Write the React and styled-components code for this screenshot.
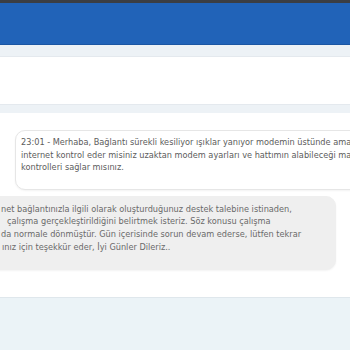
import React from "react";
import styled, { createGlobalStyle } from "styled-components";

const GlobalStyle = createGlobalStyle`
  html, body {
    margin: 0;
    padding: 0;
    width: 350px;
    height: 350px;
    overflow: hidden;
    background: #ebf3f7;
    font-family: "DejaVu Sans", "Open Sans", sans-serif;
  }
`;

const Page = styled.div`
  display: flex;
  flex-direction: column;
  width: 350px;
  height: 350px;
  overflow: hidden;
`;

const TopStrip = styled.div`
  height: 3px;
  background: #3b3e43;
`;

const Header = styled.header`
  height: 41px;
  background: #2163b8;
  border-bottom: 1px solid #1b56a3;
`;

const Band = styled.div`
  height: ${({ $h }) => $h}px;
  background: #edf2f6;
  border-top: ${({ $top }) => ($top ? "1px solid #e4e9ee" : "none")};
  border-bottom: ${({ $bottom }) => ($bottom ? "1px solid #e4e9ee" : "none")};
`;

const Panel = styled.div`
  height: ${({ $h }) => $h}px;
  background: #ffffff;
`;

const ChatArea = styled.div`
  display: flex;
  flex-direction: column;
  gap: 6px;
  padding: 17px 0 27px;
  background: #ffffff;
  border-bottom: 1px solid #dfe7ec;
`;

const Row = styled.div`
  display: flex;
  justify-content: ${({ $mine }) => ($mine ? "flex-start" : "flex-end")};
`;

const Bubble = styled.div`
  flex: none;
  box-sizing: border-box;
  display: flex;
  flex-direction: column;
  font-size: 8.2px;
  line-height: ${({ $mine }) => ($mine ? "12.7px" : "12.5px")};
  color: ${({ $mine }) => ($mine ? "#6a6a6a" : "#5c5c5c")};
  background: ${({ $mine }) => ($mine ? "#efefef" : "#ffffff")};
  border: 1px solid ${({ $mine }) => ($mine ? "#efefef" : "#e6e6e6")};
  border-radius: 10px;
  box-shadow: 0 1px 2px rgba(0, 0, 0, 0.05);
  ${({ $mine }) =>
    $mine
      ? `
    width: 356px;
    margin-left: -20px;
    padding: 6px 10px 16px 20px;
  `
      : `
    width: 420px;
    margin-left: 15px;
    margin-right: -85px;
    padding: 5px 10px 15px 5px;
  `}
`;

const Line = styled.span`
  display: block;
  white-space: nowrap;
  padding-left: ${({ $indent }) => $indent || 0}px;
`;

const Footer = styled.div`
  flex: 1;
  background: #ebf3f7;
`;

const incoming = [
  "23:01 - Merhaba, Bağlantı sürekli kesiliyor ışıklar yanıyor modemin üstünde ama",
  "internet kontrol eder misiniz uzaktan modem ayarları ve hattımın alabileceği max hız",
  "kontrolleri sağlar mısınız.",
];

const reply = [
  { text: "net bağlantınızla ilgili olarak oluşturduğunuz destek talebine istinaden," },
  { text: "çalışma gerçekleştirildiğini belirtmek isteriz. Söz konusu çalışma", indent: 6 },
  { text: "da normale dönmüştür. Gün içerisinde sorun devam ederse, lütfen tekrar" },
  { text: "ınız için teşekkür eder, İyi Günler Dileriz..", indent: 1 },
];

export default function App() {
  return (
    <>
      <GlobalStyle />
      <Page>
        <TopStrip />
        <Header />
        <Band $h={11} $bottom />
        <Panel $h={47} />
        <Band $h={8} $top />
        <ChatArea>
          <Row>
            <Bubble>
              {incoming.map((l) => (
                <Line key={l}>{l}</Line>
              ))}
            </Bubble>
          </Row>
          <Row $mine>
            <Bubble $mine>
              {reply.map((l) => (
                <Line key={l.text} $indent={l.indent}>
                  {l.text}
                </Line>
              ))}
            </Bubble>
          </Row>
        </ChatArea>
        <Footer />
      </Page>
    </>
  );
}
